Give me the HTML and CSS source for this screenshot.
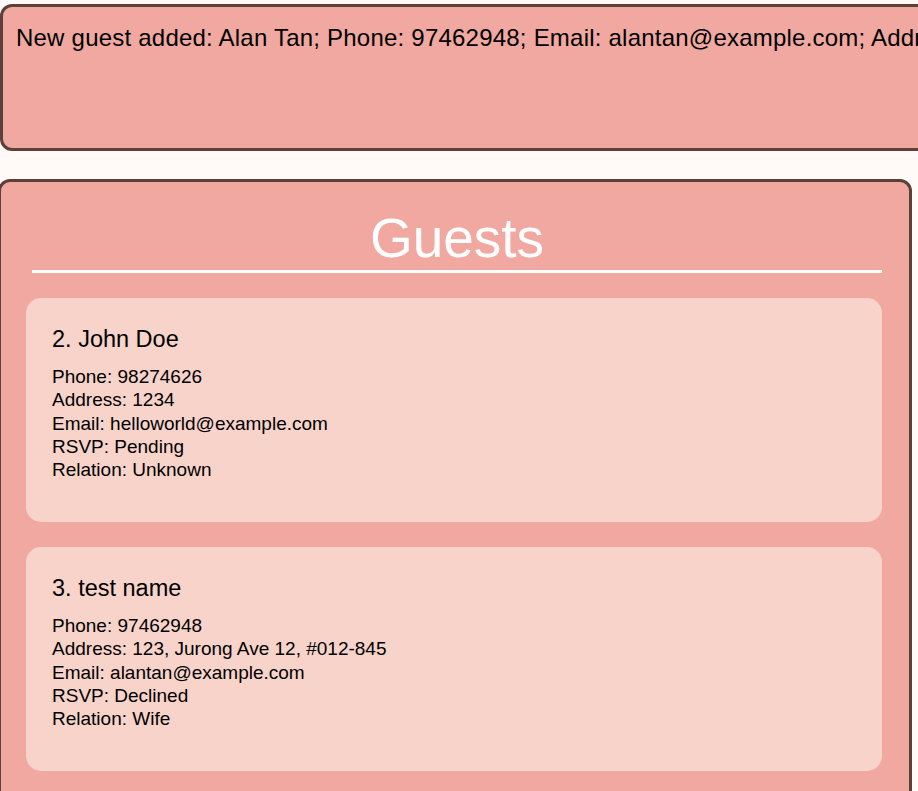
FILE: index.html
```html
<!DOCTYPE html>
<html>
<head>
<meta charset="utf-8">
<link rel="stylesheet" href="styles.css">
</head>
<body>
<div class="result">
  <p class="result-text">New guest added: Alan Tan; Phone: 97462948; Email: alantan@example.com; Address: 123, Jurong Ave 12, #012-845; RSVP: Declined; Relation: Wife</p>
</div>
<div class="panel">
  <h1 class="title">Guests</h1>
  <div class="list">
    <div class="card">
      <div class="name">2. John Doe</div>
      <div class="details">
        <div>Phone: 98274626</div>
        <div>Address: 1234</div>
        <div>Email: helloworld@example.com</div>
        <div>RSVP: Pending</div>
        <div>Relation: Unknown</div>
      </div>
    </div>
    <div class="card">
      <div class="name">3. test name</div>
      <div class="details">
        <div>Phone: 97462948</div>
        <div>Address: 123, Jurong Ave 12, #012-845</div>
        <div>Email: alantan@example.com</div>
        <div>RSVP: Declined</div>
        <div>Relation: Wife</div>
      </div>
    </div>
  </div>
</div>
</body>
</html>
```
FILE: styles.css
```css
html, body {
  margin: 0;
  padding: 0;
}
body {
  background: #fff9f8;
  font-family: "Liberation Sans", Arial, sans-serif;
  color: #000;
  overflow: hidden;
  width: 918px;
  height: 791px;
}
.result {
  margin: 4px -60px 0 0;
  height: 147px;
  box-sizing: border-box;
  border: 3px solid #5d4037;
  border-radius: 12px;
  background: #f0a8a0;
  padding: 18px 0 0 13px;
}
.result-text {
  margin: 0;
  font-size: 24px;
  line-height: 26px;
  letter-spacing: 0.22px;
  white-space: nowrap;
}
.panel {
  margin: 28px 0 0 -2px;
  width: 914px;
  box-sizing: border-box;
  border: 3px solid #5d4037;
  border-radius: 12px;
  background: #f0a8a0;
  padding: 26px 27px 200px 25px;
}
.title {
  margin: 0 0 0 6px;
  font-size: 55px;
  font-weight: normal;
  color: #fff;
  text-align: center;
  line-height: 60px;
  padding-bottom: 2px;
  border-bottom: 3px solid #fff;
}
.list {
  margin-top: 25px;
  display: flex;
  flex-direction: column;
  gap: 25px;
}
.card {
  background: #f7d3ca;
  border-radius: 15px;
  height: 224px;
  box-sizing: border-box;
  padding: 28px 26px 0 26px;
}
.name {
  font-size: 23.5px;
  line-height: 26px;
  margin-bottom: 13px;
}
.details {
  font-size: 19px;
  line-height: 23.3px;
}
```
